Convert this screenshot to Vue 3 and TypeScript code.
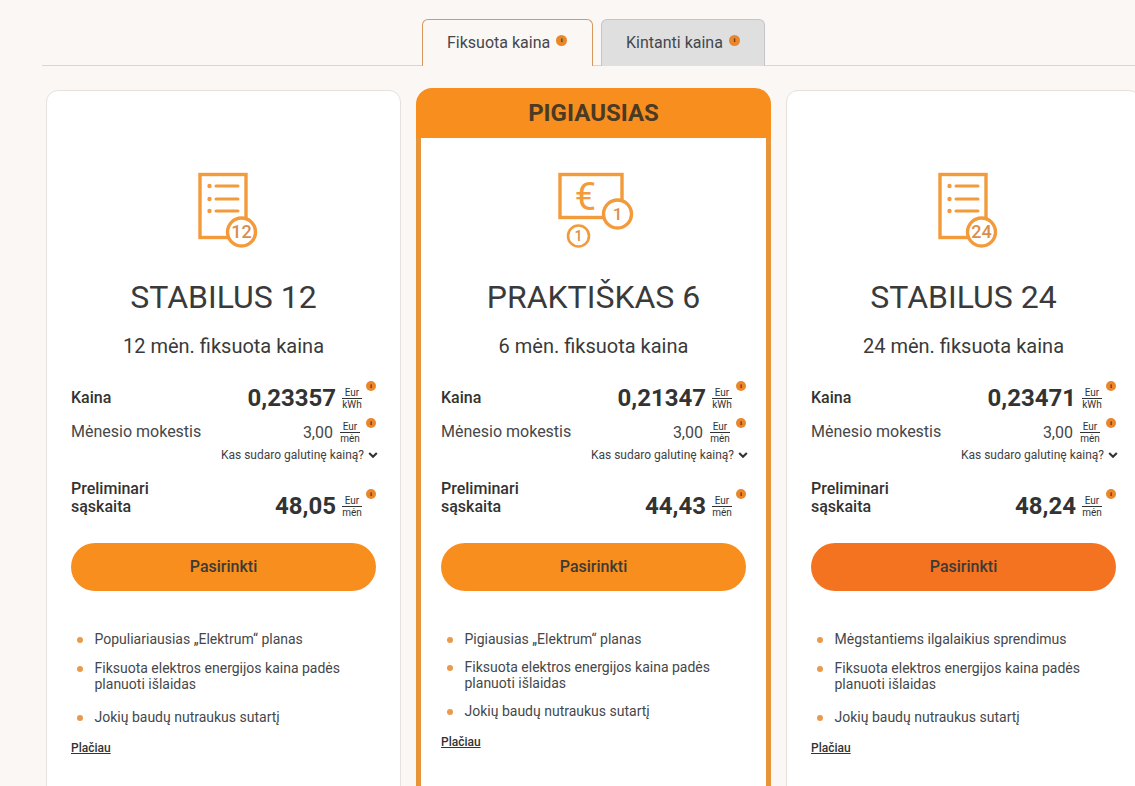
<script setup lang="ts">
interface Plan {
  name: string
  sub: string
  icon: string
  price: string
  fee: string
  bill: string
  bullets: string[]
  variant: string
}
const plans: Plan[] = [
  { name: 'STABILUS 12', sub: '12 mėn. fiksuota kaina', icon: '12', price: '0,23357', fee: '3,00', bill: '48,05', variant: 'plain', bullets: ['Populiariausias „Elektrum“ planas', 'Fiksuota elektros energijos kaina padės planuoti išlaidas', 'Jokių baudų nutraukus sutartį'] },
  { name: 'PRAKTIŠKAS 6', sub: '6 mėn. fiksuota kaina', icon: 'euro', price: '0,21347', fee: '3,00', bill: '44,43', variant: 'best', bullets: ['Pigiausias „Elektrum“ planas', 'Fiksuota elektros energijos kaina padės planuoti išlaidas', 'Jokių baudų nutraukus sutartį'] },
  { name: 'STABILUS 24', sub: '24 mėn. fiksuota kaina', icon: '24', price: '0,23471', fee: '3,00', bill: '48,24', variant: 'hover', bullets: ['Mėgstantiems ilgalaikius sprendimus', 'Fiksuota elektros energijos kaina padės planuoti išlaidas', 'Jokių baudų nutraukus sutartį'] },
]
</script>

<template>
  <div class="page">
    <nav class="tabs">
      <div class="tab active">Fiksuota kaina<span class="info tab-info">i</span></div>
      <div class="tab second">Kintanti kaina<span class="info tab-info">i</span></div>
    </nav>
    <main class="cards">
      <article v-for="p in plans" :key="p.name" class="card" :class="p.variant">
        <div v-if="p.variant === 'best'" class="ribbon">PIGIAUSIAS</div>
        <div class="body">
          <svg class="icon" viewBox="0 0 90 90" width="90" height="90" aria-hidden="true">
            <template v-if="p.icon === 'euro'">
              <rect x="11" y="9.5" width="62" height="43" class="ln" />
              <text x="36.5" y="45" class="euro">€</text>
              <circle cx="68.5" cy="49" r="14" class="ln fill" />
              <text x="68.5" y="55" class="num one">1</text>
              <circle cx="29.5" cy="71" r="10.5" class="ln thin fill" />
              <text x="29.5" y="76" class="num small">1</text>
            </template>
            <template v-else>
              <rect x="21" y="9.5" width="46" height="63" class="ln" />
              <circle cx="30.5" cy="21" r="2.2" class="dot" />
              <circle cx="30.5" cy="34" r="2.2" class="dot" />
              <circle cx="30.5" cy="46" r="2.2" class="dot" />
              <path d="M37 21h22M37 34h22M37 46h22" class="ln bars" />
              <circle cx="62.5" cy="67" r="14" class="ln fill" />
              <text x="62.5" y="73.4" class="num">{{ p.icon }}</text>
            </template>
          </svg>
          <h2 class="name">{{ p.name }}</h2>
          <p class="sub">{{ p.sub }}</p>

          <div class="row price-row">
            <span class="label strong">Kaina</span>
            <span class="value">
              <b class="big">{{ p.price }}</b>
              <span class="unit"><span>Eur</span><span>kWh</span></span>
              <span class="info">i</span>
            </span>
          </div>
          <div class="row fee-row">
            <span class="label">Mėnesio mokestis</span>
            <span class="value">
              <span class="mid">{{ p.fee }}</span>
              <span class="unit tight"><span>Eur</span><span>mėn</span></span>
              <span class="info">i</span>
            </span>
          </div>
          <div class="what">
            Kas sudaro galutinę kainą?
            <svg viewBox="0 0 10 10" width="10" height="10" aria-hidden="true"><path d="M1.2 3l3.8 3.8L8.8 3" fill="none" stroke="#333" stroke-width="2.1" /></svg>
          </div>
          <div class="row bill-row">
            <span class="label strong">Preliminari<br />sąskaita</span>
            <span class="value low">
              <b class="big">{{ p.bill }}</b>
              <span class="unit"><span>Eur</span><span>mėn</span></span>
              <span class="info">i</span>
            </span>
          </div>
          <button class="choose" type="button">Pasirinkti</button>
          <ul class="list">
            <li v-for="b in p.bullets" :key="b">{{ b }}</li>
          </ul>
          <a class="more">Plačiau</a>
        </div>
      </article>
    </main>
  </div>
</template>

<style>
html, body { margin: 0; background: #fbf7f4; overflow: hidden; }
</style>

<style scoped>
.page {
  width: 1135px;
  height: 786px;
  overflow: hidden;
  background: #fbf7f4;
  font-family: Roboto, "Liberation Sans", sans-serif;
  color: #3a3a3a;
}
.tabs {
  display: flex;
  gap: 8px;
  margin-left: 42px;
  height: 66px;
  box-sizing: border-box;
  padding: 19px 0 0 380px;
  border-bottom: 1px solid #dcd5cf;
}
.tab {
  box-sizing: border-box;
  width: 171px;
  height: 47px;
  padding: 14px 0 0 24px;
  font-size: 16px;
  line-height: 18px;
  color: #44474c;
  background: #dfdfe0;
  border: 1px solid #c5c5c7;
  border-bottom: 0;
  border-radius: 6px 6px 0 0;
  white-space: nowrap;
}
.tab.second {
  width: 164px;
}
.tab.active {
  background: #fbf7f4;
  border-color: #d9975d;
}
.info {
  flex: none;
  display: inline-block;
  width: 10px;
  height: 10px;
  border-radius: 50%;
  background: #e8872b;
  color: #4b2f12;
  font: bold 7px/10px "Liberation Serif", serif;
  text-align: center;
}
.tab-info {
  width: 11px;
  height: 11px;
  line-height: 11px;
  margin-left: 6px;
  vertical-align: 6px;
}
.cards {
  display: flex;
  gap: 15px;
  margin: 24px 0 0 46px;
  width: 1200px;
  align-items: flex-start;
}
.card {
  box-sizing: border-box;
  width: 355px;
  height: 760px;
  background: #fff;
  border: 1px solid #e6e1dd;
  border-radius: 12px 12px 0 0;
}
.card.best {
  margin-top: -2px;
  background: none;
  border: 0;
  height: 762px;
}
.ribbon {
  height: 50px;
  background: #f78e1e;
  border-radius: 16px 16px 0 0;
  font-size: 24px;
  font-weight: 700;
  line-height: 51px;
  text-align: center;
  color: #4b3a24;
}
.body {
  box-sizing: border-box;
  height: 100%;
  padding: 74px 24px 0;
  display: flex;
  flex-direction: column;
}
.best .body {
  height: 712px;
  padding: 27px 20px 0;
  background: #fff;
  border: 5px solid #e8953a;
  border-top: 0;
}
.icon {
  display: block;
  align-self: center;
  flex: none;
}
.ln {
  fill: none;
  stroke: #f39a3b;
  stroke-width: 3.4;
}
.ln.fill { fill: #fff; }
.ln.thin { stroke-width: 2.6; }
.ln.bars { stroke-linecap: round; stroke-width: 3; }
.dot { fill: #f39a3b; }
.num {
  fill: #d98f4c;
  font-size: 18px;
  font-weight: 500;
  text-anchor: middle;
}
.num.one { font-size: 17px; }
.num.small { font-size: 14px; }
.euro {
  fill: #f39a3b;
  font-size: 38px;
  font-weight: 400;
  text-anchor: middle;
}
.name {
  margin: 23px 0 0;
  font-size: 32px;
  line-height: 38px;
  font-weight: 400;
  text-align: center;
  color: #3a3a3a;
}
.sub {
  margin: 18px 0 0;
  font-size: 20px;
  line-height: 24px;
  text-align: center;
  color: #3a3a3a;
}
.row {
  display: flex;
  justify-content: space-between;
  align-items: center;
}
.price-row { margin-top: 25px; height: 30px; }
.fee-row { margin-top: 4px; height: 30px; }
.bill-row { margin-top: 15px; height: 40px; }
.label {
  font-size: 16px;
  line-height: 18px;
  color: #45474a;
}
.label.strong {
  font-weight: 500;
  color: #333;
}
.value {
  display: flex;
  align-items: center;
}
.value.low {
  margin-top: 16px;
}
.big {
  font-size: 24px;
  line-height: 28px;
  font-weight: 700;
  color: #333;
}
.mid {
  font-size: 16px;
  color: #45474a;
}
.unit {
  display: inline-flex;
  flex-direction: column;
  width: 20px;
  margin: 0 4px 0 6px;
  font-size: 10px;
  line-height: 11px;
  text-align: center;
  color: #333;
}
.unit.tight {
  margin: 0 6px 0 7px;
}
.unit span:first-child { border-bottom: 1px solid #333; }
.value .info {
  align-self: flex-start;
  margin-top: -3px;
}
.what {
  display: flex;
  justify-content: flex-end;
  align-items: center;
  gap: 4px;
  margin: 0 -2px 0 0;
  height: 16px;
  font-size: 12px;
  color: #3f4246;
}
.choose {
  flex: none;
  margin-top: 25px;
  height: 48px;
  padding: 0 0 2px;
  border: 0;
  border-radius: 24px;
  background: #f78e1e;
  font: 500 16px Roboto, sans-serif;
  color: #3d3a36;
}
.hover .choose { background: #f47321; }
.list {
  list-style: none;
  margin: 40px 0 0;
  padding: 0 0 0 23.5px;
  font-size: 14px;
  line-height: 16px;
  color: #45474a;
}
.list li {
  position: relative;
  margin-bottom: 13px;
}
.list li:nth-child(2) { margin-bottom: 17px; }
.best .list li { margin-bottom: 12px; }
.best .list li:nth-child(2) { margin-bottom: 12px; }
.list li::before {
  content: "";
  position: absolute;
  left: -18px;
  top: 6px;
  width: 6px;
  height: 6px;
  border-radius: 50%;
  background: #ea9a4c;
}
.more {
  margin-top: 2px;
  align-self: flex-start;
  font-size: 12px;
  font-weight: 500;
  line-height: 16px;
  text-decoration: underline;
  color: #333;
}
.best .more {
  margin-top: 3px;
}
</style>
